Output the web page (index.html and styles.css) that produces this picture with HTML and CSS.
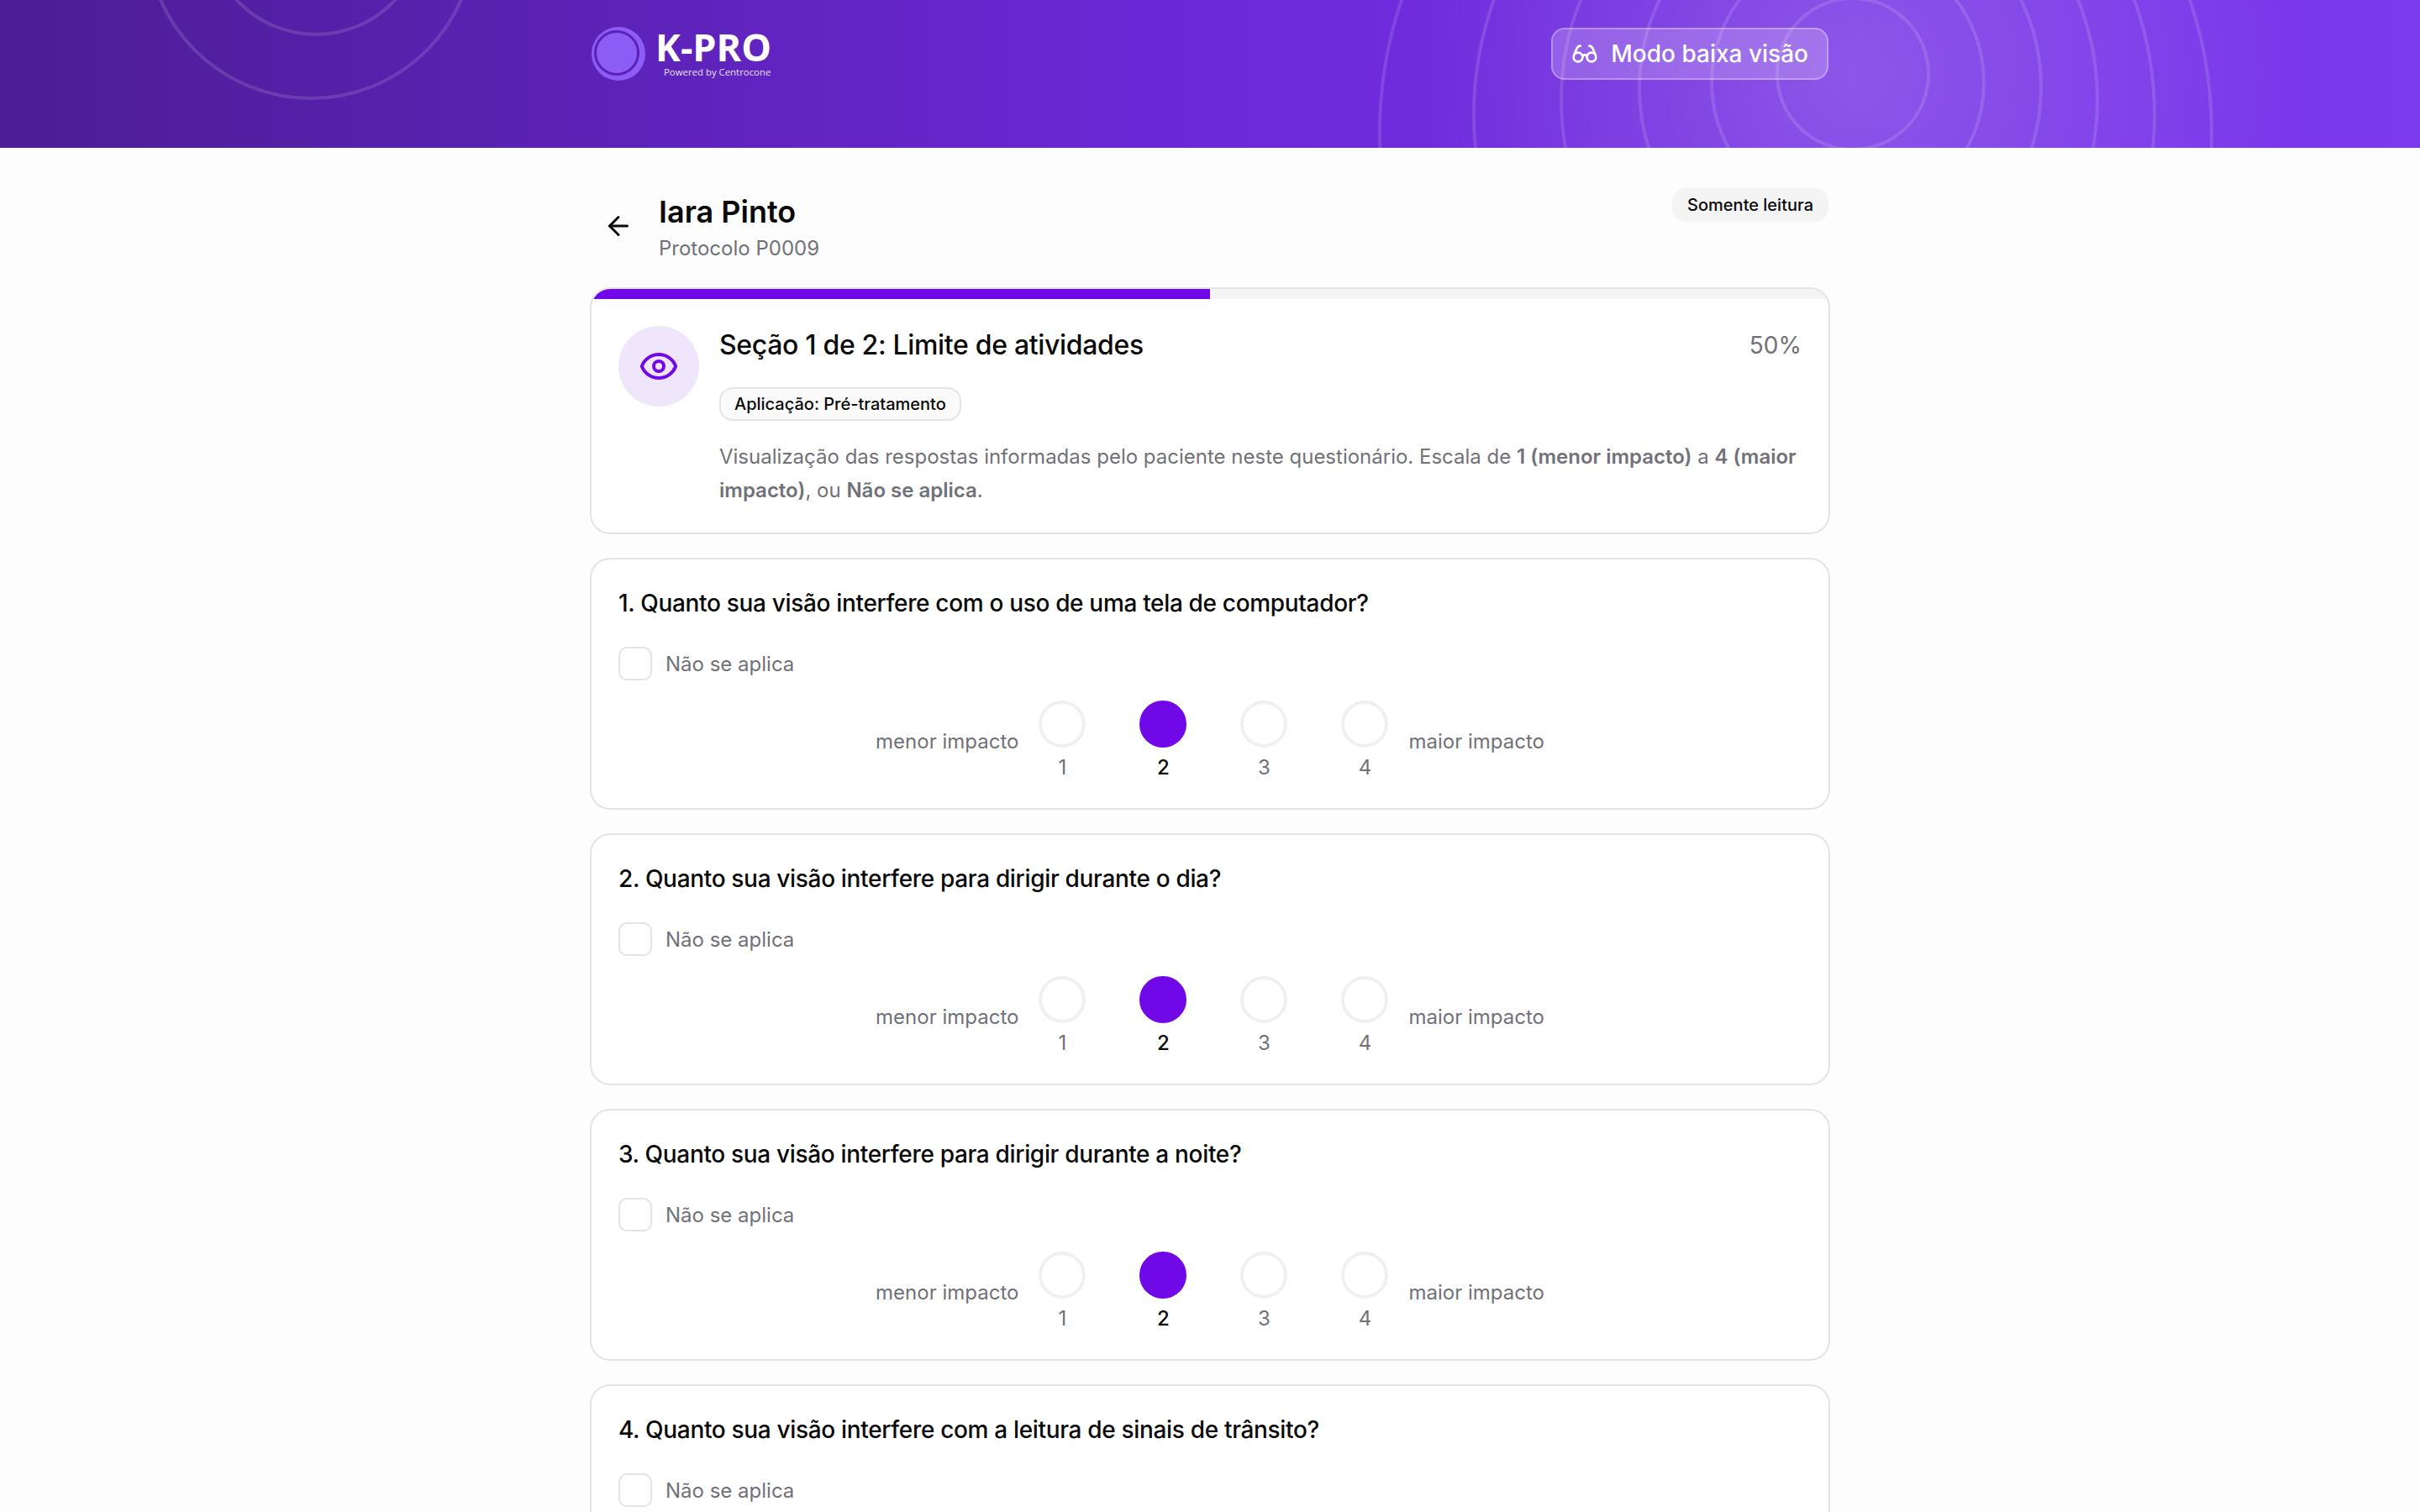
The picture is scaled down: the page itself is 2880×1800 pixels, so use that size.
FILE: index.html
```html
<!DOCTYPE html>
<html lang="pt-BR">
<head>
    <meta charset="UTF-8">
    <meta name="viewport" content="width=device-width, initial-scale=1.0">
    <title>K-PRO</title>
    <link rel="stylesheet" href="styles.css">
</head>
<body>
    <header class="top">
        <svg class="rings" viewBox="0 0 2880 176" aria-hidden="true">
            <circle cx="376" cy="-88" r="129" />
            <circle cx="370" cy="-78" r="195" />
            <circle cx="2205" cy="88" r="90" />
            <circle cx="2199" cy="98" r="162" />
            <circle cx="2190" cy="104" r="239" />
            <circle cx="2177" cy="119" r="319" />
            <circle cx="2159" cy="137" r="405" />
            <circle cx="2137" cy="158" r="495" />
        </svg>
        <div class="top-inner">
            <div class="logo">
                <div class="logo-mark"><div class="logo-dot"></div></div>
                <div class="logo-text">
                    <div class="logo-name">K-PRO</div>
                    <div class="logo-sub">Powered by Centrocone</div>
                </div>
            </div>
            <button class="lowvision">
                <svg class="lowvision-icon" viewBox="0 0 24 24"><circle cx="6" cy="15" r="4"/><circle cx="18" cy="15" r="4"/><path d="M14 15a2 2 0 0 0-2-2 2 2 0 0 0-2 2"/><path d="M2.5 13 5 7c.7-1.3 1.4-2 3-2"/><path d="M21.5 13 19 7c-.7-1.3-1.5-2-3-2"/></svg>
                Modo baixa visão
            </button>
        </div>
    </header>

    <main class="page">
        <div class="head">
            <div class="patient">
                <button class="back">
                    <svg viewBox="0 0 24 24"><path d="m12 19-7-7 7-7"/><path d="M19 12H5"/></svg>
                </button>
                <div class="patient-text">
                    <h1 class="name">Iara Pinto</h1>
                    <p class="protocol">Protocolo P0009</p>
                </div>
            </div>
            <span class="readonly">Somente leitura</span>
        </div>

        <section class="card intro">
            <div class="progress"><div class="progress-fill"></div></div>
            <div class="intro-body">
                <div class="intro-icon">
                    <svg viewBox="0 0 24 24"><path d="M2.062 12.348a1 1 0 0 1 0-.696 10.75 10.75 0 0 1 19.876 0 1 1 0 0 1 0 .696 10.75 10.75 0 0 1-19.876 0"/><circle cx="12" cy="12" r="3"/></svg>
                </div>
                <div class="intro-text">
                    <div class="intro-title">
                        <h2 class="section-name">Seção 1 de 2: Limite de atividades</h2>
                        <span class="percent">50%</span>
                    </div>
                    <span class="chip">Aplicação: Pré-tratamento</span>
                    <p class="desc">Visualização das respostas informadas pelo paciente neste questionário. Escala de <b>1 (menor impacto)</b> a <b>4 (maior impacto)</b>, ou <b>Não se aplica</b>.</p>
                </div>
            </div>
        </section>

        <section class="card question">
            <h3 class="q-title">1. Quanto sua visão interfere com o uso de uma tela de computador?</h3>
            <label class="na"><span class="box"></span>Não se aplica</label>
            <div class="scale">
                <span class="scale-label">menor impacto</span>
                <div class="opt"><span class="dot"></span><span class="num">1</span></div>
                <div class="opt on"><span class="dot"></span><span class="num">2</span></div>
                <div class="opt"><span class="dot"></span><span class="num">3</span></div>
                <div class="opt"><span class="dot"></span><span class="num">4</span></div>
                <span class="scale-label">maior impacto</span>
            </div>
        </section>

        <section class="card question">
            <h3 class="q-title">2. Quanto sua visão interfere para dirigir durante o dia?</h3>
            <label class="na"><span class="box"></span>Não se aplica</label>
            <div class="scale">
                <span class="scale-label">menor impacto</span>
                <div class="opt"><span class="dot"></span><span class="num">1</span></div>
                <div class="opt on"><span class="dot"></span><span class="num">2</span></div>
                <div class="opt"><span class="dot"></span><span class="num">3</span></div>
                <div class="opt"><span class="dot"></span><span class="num">4</span></div>
                <span class="scale-label">maior impacto</span>
            </div>
        </section>

        <section class="card question">
            <h3 class="q-title">3. Quanto sua visão interfere para dirigir durante a noite?</h3>
            <label class="na"><span class="box"></span>Não se aplica</label>
            <div class="scale">
                <span class="scale-label">menor impacto</span>
                <div class="opt"><span class="dot"></span><span class="num">1</span></div>
                <div class="opt on"><span class="dot"></span><span class="num">2</span></div>
                <div class="opt"><span class="dot"></span><span class="num">3</span></div>
                <div class="opt"><span class="dot"></span><span class="num">4</span></div>
                <span class="scale-label">maior impacto</span>
            </div>
        </section>

        <section class="card question">
            <h3 class="q-title">4. Quanto sua visão interfere com a leitura de sinais de trânsito?</h3>
            <label class="na"><span class="box"></span>Não se aplica</label>
            <div class="scale">
                <span class="scale-label">menor impacto</span>
                <div class="opt"><span class="dot"></span><span class="num">1</span></div>
                <div class="opt on"><span class="dot"></span><span class="num">2</span></div>
                <div class="opt"><span class="dot"></span><span class="num">3</span></div>
                <div class="opt"><span class="dot"></span><span class="num">4</span></div>
                <span class="scale-label">maior impacto</span>
            </div>
        </section>
    </main>
</body>
</html>
```

FILE: styles.css
```css
* {
    margin: 0;
    padding: 0;
    box-sizing: border-box;
}
html {
    overflow: hidden;
}
body {
    background: #fdfdfd;
    color: #0a0a0a;
    font-family: Inter, "Liberation Sans", sans-serif;
}
svg {
    display: block;
    fill: none;
    stroke: currentColor;
    stroke-linecap: round;
    stroke-linejoin: round;
}

/* header */
.top {
    position: relative;
    height: 176px;
    overflow: hidden;
    background:
        radial-gradient(circle at 2205px 88px, rgba(255,255,255,.18), rgba(255,255,255,0) 520px),
        linear-gradient(90deg, #4c1d95, #6d28d9 50%, #7c3aed);
}
.rings {
    position: absolute;
    top: 0;
    left: 0;
    width: 2880px;
    height: 176px;
    stroke: rgba(255,255,255,.13);
    stroke-width: 4;
}
.top-inner {
    position: relative;
    width: 1472px;
    margin: 0 auto;
    padding-top: 32px;
    display: flex;
    justify-content: space-between;
    align-items: center;
}
.logo {
    display: flex;
    align-items: center;
    gap: 12px;
}
.logo-mark {
    width: 64px;
    height: 64px;
    border-radius: 50%;
    background: #8b5cf6;
    padding: 7px 0 0 6px;
}
.logo-dot {
    width: 48px;
    height: 48px;
    border-radius: 50%;
    background: #8b5cf6;
    outline: 3px solid #5b21b6;
}
.logo-text {
    color: #fff;
    font-family: "Open Sans", sans-serif;
}
.logo-name {
    font-size: 45px;
    font-weight: 700;
    line-height: 46px;
    margin-top: -3px;
}
.logo-sub {
    font-size: 11.4px;
    line-height: 13px;
    margin-left: 10px;
    opacity: .85;
}
.lowvision {
    display: flex;
    align-items: center;
    gap: 15px;
    height: 62px;
    padding: 0 22px;
    border: 2px solid rgba(255,255,255,.3);
    border-radius: 16px;
    background: rgba(255,255,255,.2);
    color: #fff;
    font-family: inherit;
    font-size: 28px;
    font-weight: 500;
}
.lowvision-icon {
    width: 32px;
    height: 32px;
    stroke-width: 2;
}

/* page */
.page {
    width: 1476px;
    margin: 0 auto;
    padding-top: 48px;
}
.head {
    display: flex;
    justify-content: space-between;
    align-items: flex-start;
    height: 118px;
}
.patient {
    display: flex;
    align-items: center;
    gap: 30px;
    padding-left: 16px;
}
.back {
    width: 36px;
    height: 36px;
    background: none;
    border: none;
    color: #0a0a0a;
}
.back svg {
    width: 36px;
    height: 36px;
    stroke-width: 2;
}
.patient-text {
    padding-top: 6px;
}
.name {
    font-size: 36px;
    font-weight: 600;
    line-height: 44px;
}
.protocol {
    margin-top: 4px;
    font-size: 24px;
    line-height: 36px;
    color: #71717a;
}
.readonly {
    height: 40px;
    margin-right: 2px;
    padding: 0 18px;
    border-radius: 16px;
    background: #f4f4f5;
    font-size: 20px;
    font-weight: 500;
    line-height: 41px;
}

/* cards */
.card {
    background: #fff;
    border: 2px solid #e4e4e7;
    border-radius: 24px;
    overflow: hidden;
    margin-bottom: 28px;
}
.progress {
    height: 12px;
    background: #f4f4f5;
}
.progress-fill {
    width: 50%;
    height: 100%;
    background: #7008e7;
}
.intro-body {
    display: flex;
    gap: 24px;
    padding: 32px 32px 30px;
}
.intro-icon {
    flex: none;
    width: 96px;
    height: 96px;
    border-radius: 50%;
    background: #efe6fb;
    color: #7008e7;
    display: flex;
    align-items: center;
    justify-content: center;
}
.intro-icon svg {
    width: 48px;
    height: 48px;
    stroke-width: 2;
}
.intro-text {
    flex: 1;
}
.intro-title {
    display: flex;
    justify-content: space-between;
    align-items: center;
    height: 44px;
    margin-bottom: 29px;
}
.section-name {
    font-size: 32px;
    font-weight: 500;
    letter-spacing: -.33px;
}
.percent {
    margin-top: 2px;
    font-size: 28px;
    color: #71717a;
}
.chip {
    display: inline-block;
    height: 40px;
    padding: 0 16px;
    border: 2px solid #e4e4e7;
    border-radius: 16px;
    background: #fafafa;
    font-size: 20px;
    font-weight: 500;
    line-height: 36px;
}
.desc {
    margin-top: 23px;
    font-size: 24px;
    line-height: 40px;
    color: #71717a;
}
.desc b {
    font-weight: 600;
}
.question {
    height: 300px;
    padding: 32px;
}
.q-title {
    font-size: 28px;
    font-weight: 500;
    line-height: 40px;
    letter-spacing: -.33px;
}
.na {
    display: flex;
    align-items: center;
    gap: 16px;
    margin-top: 32px;
    font-size: 24px;
    color: #71717a;
}
.box {
    width: 40px;
    height: 40px;
    border: 2px solid #e4e4e7;
    border-radius: 10px;
    background: #fff;
}
.scale {
    display: flex;
    justify-content: center;
    align-items: center;
    gap: 24px;
    margin-top: 24px;
}
.scale-label {
    font-size: 24px;
    color: #71717a;
}
.opt {
    width: 56px;
    display: flex;
    flex-direction: column;
    align-items: center;
    gap: 8px;
}
.opt + .opt {
    margin-left: 40px;
}
.dot {
    width: 56px;
    height: 56px;
    border: 4px solid #f0f0f1;
    border-radius: 50%;
    background: #fff;
}
.num {
    font-size: 24px;
    line-height: 32px;
    color: #71717a;
}
.on .dot {
    background: #7008e7;
    border-color: #7008e7;
}
.on .num {
    color: #0a0a0a;
    font-weight: 500;
}
```
